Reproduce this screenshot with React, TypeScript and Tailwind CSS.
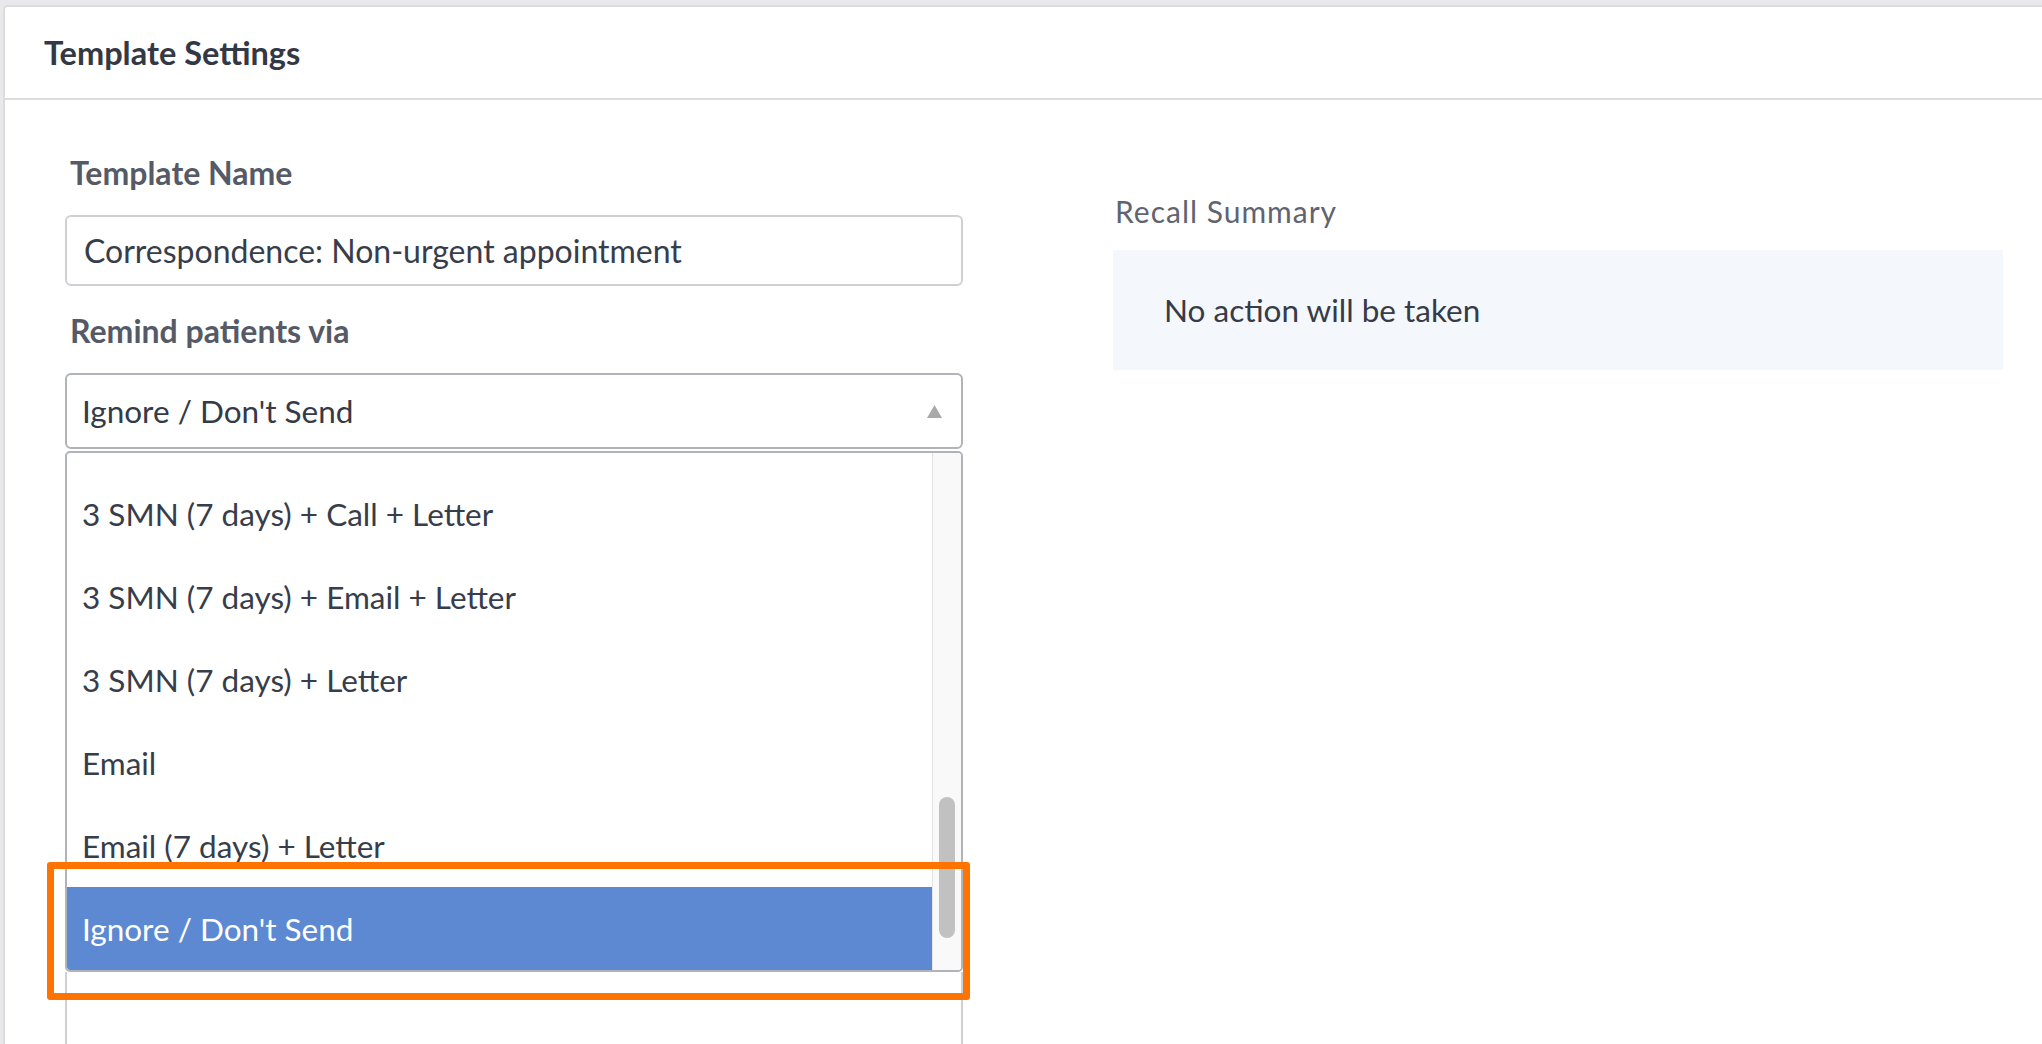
import { ReactNode } from 'react'

// Options of the open "Remind patients via" list, already scrolled down
const options = [
  '3 SMN (7 days) + Call + Letter',
  '3 SMN (7 days) + Email + Letter',
  '3 SMN (7 days) + Letter',
  'Email',
  'Email (7 days) + Letter',
  "Ignore / Don't Send",
]

const selected = "Ignore / Don't Send"

const Label = ({ children }: { children: ReactNode }) => (
  <div className="h-[40px] flex items-center pl-[5px] text-[32px] leading-[40px] font-bold text-[#555a66]">
    {children}
  </div>
)

export default function App() {
  return (
    <div className="relative w-[2042px] h-[1044px] overflow-hidden bg-[#e9e9eb] pt-[5px] pl-[3px] font-['Lato',sans-serif]">
      <div className="w-[2080px] h-[1100px] bg-white border-2 border-[#dcdcdc] rounded-[5px]">
        {/* Header */}
        <div className="h-[93px] flex items-center pl-[39px] border-b-2 border-[#dcdcdc] text-[32.5px] leading-[40px] font-bold text-[#333844]">
          Template Settings
        </div>

        <div className="flex pl-[60px]">
          {/* Form column */}
          <div className="w-[898px] pt-[53px]">
            <Label>Template Name</Label>
            <div className="mt-[22px] h-[71px] flex items-center pl-[17px] border-2 border-[#cfd0d3] rounded-[6px] text-[32px] leading-[40px] text-[#373d4a]">
              Correspondence: Non-urgent appointment
            </div>

            <div className="mt-[25px]">
              <Label>Remind patients via</Label>
            </div>

            <div className="mt-[22px] h-[76px] flex items-center justify-between pl-[15px] pr-[19px] border-2 border-[#b0b3b8] rounded-[6px] text-[31.5px] leading-[40px] text-[#343a47]">
              <span>{selected}</span>
              <svg width="15" height="13" viewBox="0 0 15 13">
                <path d="M7.5 0 L15 13 L0 13 Z" fill="#a9a9a9" />
              </svg>
            </div>

            {/* Open dropdown list (scrolled, so the row above is only partly in view) */}
            <div className="mt-[2px] h-[521px] flex border-2 border-[#b0b3b8] rounded-[5px] overflow-hidden">
              <div className="flex-1 overflow-hidden pt-[19px]">
                {options.map((opt) => (
                  <div
                    key={opt}
                    className={
                      opt === selected
                        ? 'h-[83px] flex items-center pl-[15px] text-[31.5px] leading-[40px] bg-[#5c89d1] text-white rounded-bl-[3px]'
                        : 'h-[83px] flex items-center pl-[15px] text-[31.5px] leading-[40px] text-[#373d4a]'
                    }
                  >
                    {opt}
                  </div>
                ))}
              </div>
              {/* scrollbar */}
              <div className="w-[29px] bg-[#f9f9f9] border-l border-[#e4e4e4] pt-[344px] px-[6px]">
                <div className="h-[141px] rounded-full bg-[#c1c1c1]" />
              </div>
            </div>

            {/* field underneath the list */}
            <div className="h-[120px] border-x-2 border-[#cfd0d3]" />
          </div>

          {/* Summary column */}
          <div className="ml-[150px] w-[890px] pt-[91px]">
            <div className="h-[40px] flex items-center pl-[2px] text-[30px] leading-[40px] tracking-[1px] text-[#5f6470]">
              Recall Summary
            </div>
            <div className="mt-[19px] h-[120px] flex items-center pl-[51px] bg-[#f4f7fc] text-[31.5px] leading-[40px] text-[#363b48]">
              No action will be taken
            </div>
          </div>
        </div>
      </div>

      {/* annotation box */}
      <div className="absolute left-[47px] top-[862px] w-[923px] h-[138px] border-[7px] border-[#ff7300] rounded-[3px]" />
    </div>
  )
}
